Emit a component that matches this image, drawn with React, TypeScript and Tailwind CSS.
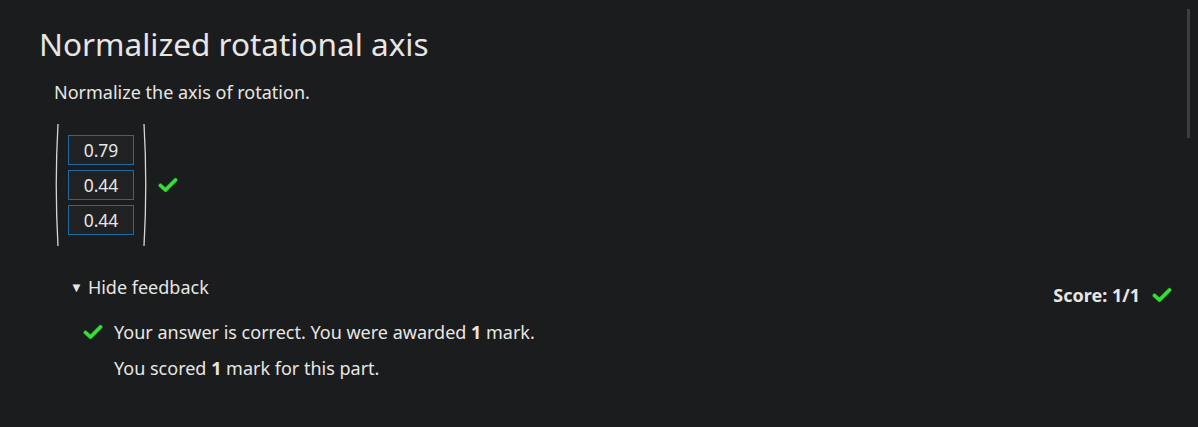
import React from "react";

function Tick({ className = "" }: { className?: string }) {
  return (
    <svg viewBox="0 0 20 16" width="20" height="16" className={className}>
      <path
        d="M2.5 8.5 L7.5 13 L17.5 3"
        fill="none"
        stroke="#1a3a1a"
        strokeWidth="5.2"
        strokeLinecap="round"
        strokeLinejoin="round"
      />
      <path
        d="M2.5 8.5 L7.5 13 L17.5 3"
        fill="none"
        stroke="#33e033"
        strokeWidth="3.6"
        strokeLinecap="round"
        strokeLinejoin="round"
      />
    </svg>
  );
}

function Paren({ right = false }: { right?: boolean }) {
  return (
    <svg width="6" height="124" viewBox="0 0 6 124" className="shrink-0">
      <path
        d={right ? "M2 1 Q5.5 62 2 123" : "M4 1 Q0.5 62 4 123"}
        fill="none"
        stroke="#d8d6d2"
        strokeWidth="1.3"
      />
    </svg>
  );
}

export default function App() {
  const vals = ["0.79", "0.44", "0.44"];
  return (
    <div
      className="relative w-[1198px] h-[427px] overflow-hidden bg-[#1b1c1e] text-[#e8e6e3]"
      style={{ fontFamily: '"Noto Sans", "Open Sans", sans-serif' }}
    >
      <div className="absolute right-[8px] top-[9px] w-[3px] h-[129px] bg-[#3c3f41]" />
      <div className="pl-[39px] pr-[26px] pt-[22px]">
        <h1 className="text-[31.5px] leading-[44px] font-normal">Normalized rotational axis</h1>
        <div className="pl-[15px]">
          <p className="text-[18px] leading-[26px] mt-[13px]">Normalize the axis of rotation.</p>
          <div className="flex items-center mt-[18px]">
            <Paren />
            <div className="flex flex-col gap-[5px] mx-[8px]">
              {vals.map((v, i) => (
                <div
                  key={i}
                  className="w-[66px] h-[30px] border border-[#1d6aa5] bg-[#1f2123] text-[17.5px] leading-[28px] text-center text-[#e8e6e3]"
                >
                  {v}
                </div>
              ))}
            </div>
            <Paren right />
            <Tick className="ml-[10px]" />
          </div>
        </div>
        <div className="flex items-start justify-between mt-[26px] pl-[33px]">
          <div>
            <div className="flex items-center text-[18px] leading-[26px] mt-[1px]">
              <span className="text-[13px] leading-[26px] mr-[5px] -ml-[2px]">▼</span>
              <span>Hide feedback</span>
            </div>
            <div className="mt-[19px] flex items-center text-[18px] leading-[26px] ml-[11px]">
              <Tick className="mr-[11px]" />
              <span>
                Your answer is correct. You were awarded <b className="font-bold">1</b> mark.
              </span>
            </div>
            <div className="mt-[10px] text-[18px] leading-[26px] pl-[42px]">
              You scored <b className="font-bold">1</b> mark for this part.
            </div>
          </div>
          <div className="flex items-center mt-[9px] text-[18px] leading-[26px] font-bold">
            <span>Score: 1/1</span>
            <Tick className="ml-[12px]" />
          </div>
        </div>
      </div>
    </div>
  );
}
